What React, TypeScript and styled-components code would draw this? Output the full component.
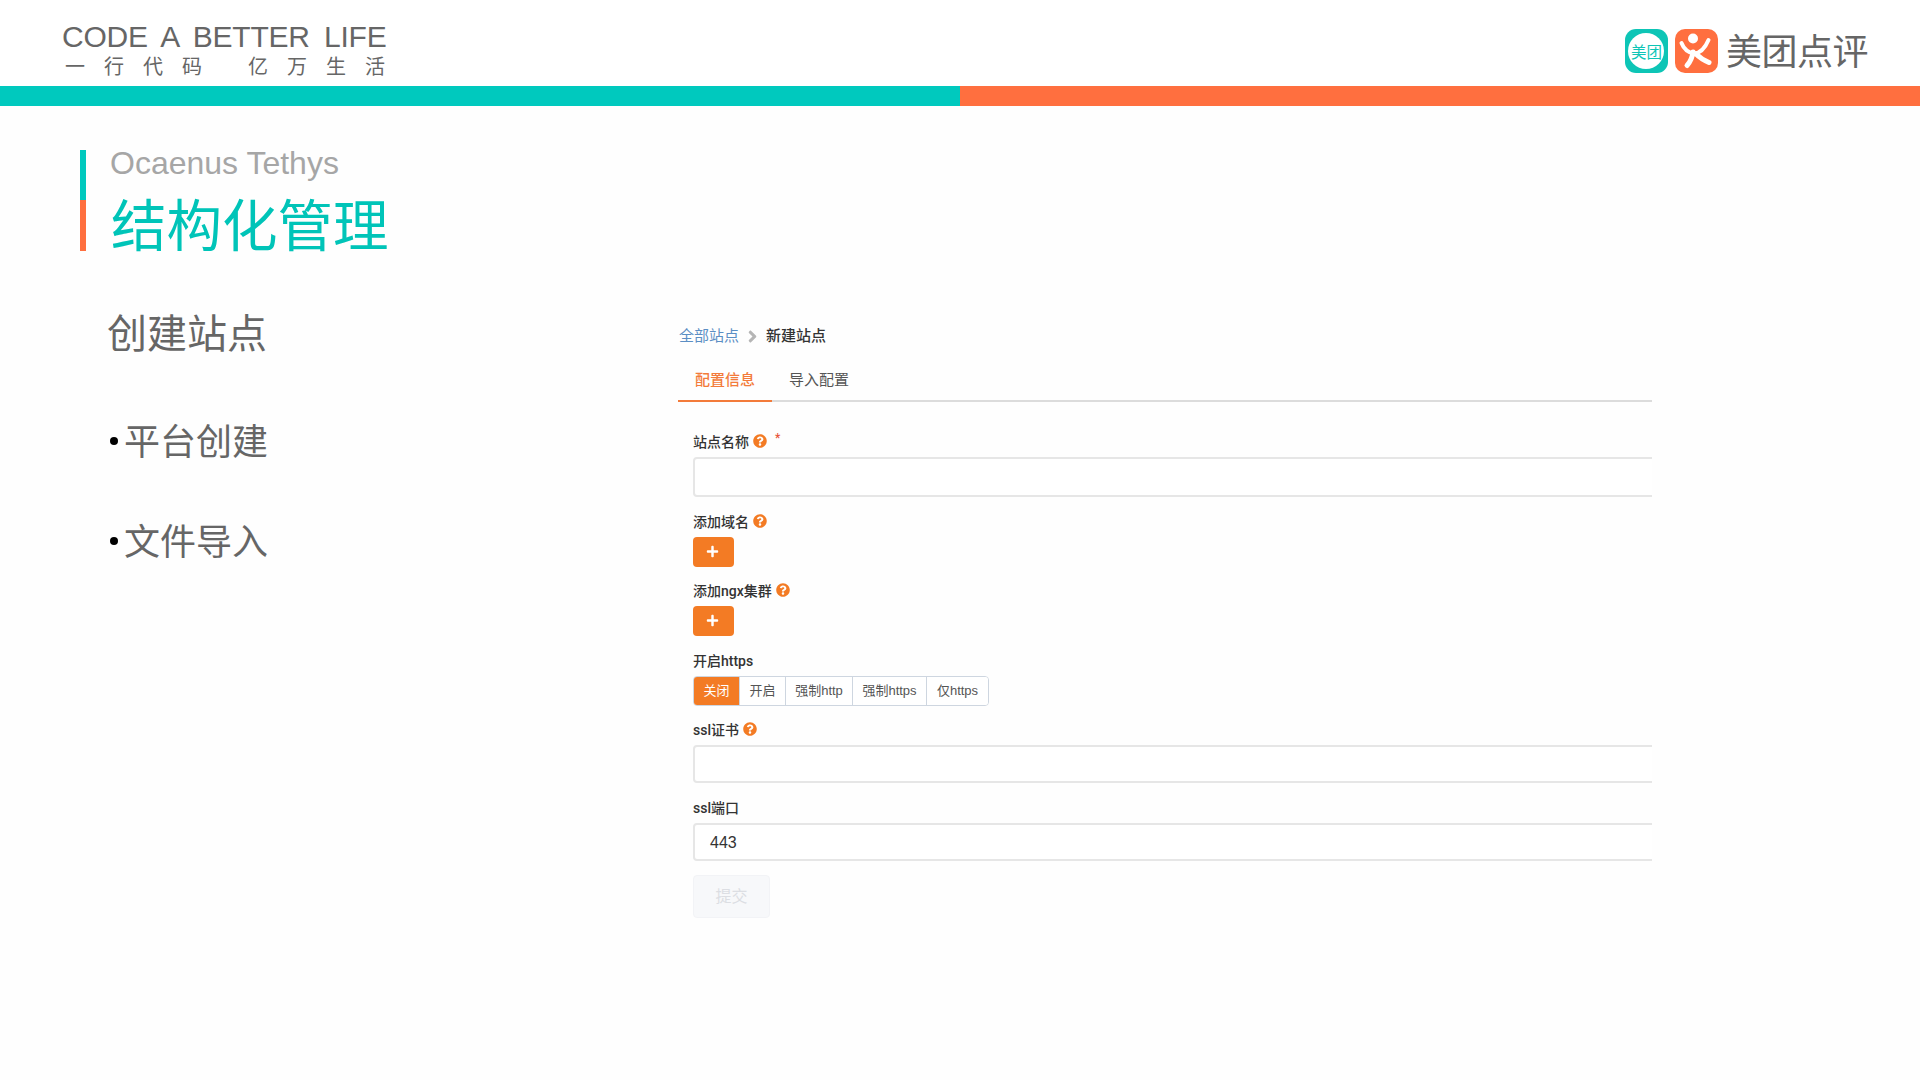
import styled, { createGlobalStyle } from 'styled-components';
import { FaAngleRight, FaPlus, FaQuestionCircle } from 'react-icons/fa';

const GlobalStyle = createGlobalStyle`
  html, body {
    margin: 0;
    padding: 0;
    background: #fff;
  }
  body {
    font-family: "Liberation Sans", "Noto Sans CJK SC", sans-serif;
  }
`;

const Page = styled.div`
  width: 1920px;
  height: 1080px;
  overflow: hidden;
  background: #fefefe;
`;

const Header = styled.header`
  height: 86px;
  display: flex;
  justify-content: space-between;
  align-items: flex-start;
  padding: 0 52px 0 62px;
  box-sizing: border-box;
  background: #fff;
`;

const Motto = styled.div`
  padding-top: 20px;
  color: #666;
`;

const MottoEn = styled.div`
  font-size: 30px;
  line-height: 34px;
  letter-spacing: -0.2px;
  word-spacing: 6px;
  white-space: nowrap;
`;

const MottoCn = styled.div`
  display: flex;
  gap: 27px;
  margin: -1px 0 0 3px;
  font-family: "Noto Sans CJK SC", sans-serif;
  font-size: 20px;
  line-height: 26px;
  letter-spacing: 19px;
  white-space: nowrap;
`;

const Brand = styled.div`
  display: flex;
  align-items: center;
  gap: 7px;
  padding-top: 28px;
`;

const BrandName = styled.span`
  margin: 0 0 3px 1px;
  font-family: "Noto Sans CJK SC", sans-serif;
  font-size: 36px;
  line-height: 43px;
  letter-spacing: -0.5px;
  color: #666;
`;

const MeituanIcon = styled.div`
  width: 43px;
  height: 44px;
  border-radius: 11px;
  background: #0dc5b6;
  display: flex;
  align-items: center;
  justify-content: center;
`;

const MeituanDisc = styled.div`
  width: 36px;
  height: 36px;
  border-radius: 50%;
  background: #fff;
  color: #0dc5b6;
  font-family: "Noto Sans CJK SC", sans-serif;
  font-size: 15.5px;
  line-height: 36px;
  text-align: center;
  white-space: nowrap;
`;

const ColorBar = styled.div`
  display: flex;
  height: 20px;
`;

const ColorSegment = styled.div<{ $colour: string }>`
  flex: 1;
  background: ${(p) => p.$colour};
`;

const TitleBlock = styled.div`
  display: flex;
  margin: 44px 0 0 80px;
  height: 101px;
`;

const AccentBar = styled.div`
  width: 6px;
  background: linear-gradient(#00c9be 0 50px, #ff6f3f 50px);
`;

const TitleText = styled.div`
  margin-left: 24px;
`;

const Subtitle = styled.div`
  font-size: 32px;
  line-height: 38px;
  color: #a6a6a6;
  margin-top: -6px;
`;

const Title = styled.h1`
  margin: 5px 0 0 1px;
  font-family: "Noto Sans CJK SC", sans-serif;
  font-size: 55.5px;
  line-height: 70px;
  font-weight: 400;
  color: #00c4b8;
`;

const Body = styled.div`
  display: flex;
  margin-top: 53px;
`;

const Points = styled.div`
  width: 678px;
  flex: none;
  box-sizing: border-box;
  padding-left: 107px;
  font-family: "Noto Sans CJK SC", sans-serif;
  color: #666;
`;

const PointHeading = styled.div`
  font-size: 40px;
  line-height: 52px;
  margin-top: 1px;
`;

const Point = styled.div<{ $gap: number }>`
  display: flex;
  align-items: center;
  margin-top: ${(p) => p.$gap}px;
  font-size: 36px;
  line-height: 50px;
`;

const Bullet = styled.i`
  width: 8px;
  height: 8px;
  margin: 4px 6px 0 3px;
  border-radius: 50%;
  background: #000;
`;

const Panel = styled.div`
  width: 974px;
  flex: none;
  overflow: hidden;
  padding-top: 22px;
  font-size: 14px;
`;

const Breadcrumb = styled.div`
  display: flex;
  align-items: center;
  height: 20px;
  padding-left: 1px;
  font-size: 15px;
  line-height: 20px;
`;

const CrumbLink = styled.a`
  color: #5b8ec4;
`;

const CrumbSeparator = styled.span`
  display: flex;
  justify-content: center;
  width: 27px;
  color: #b5b5b5;
  font-size: 19px;
`;

const CrumbCurrent = styled.span`
  color: #333;
  font-weight: 500;
`;

const Tabs = styled.div`
  display: flex;
  margin-top: 14px;
  height: 40px;
  border-bottom: 2px solid #dcdcdc;
  box-sizing: content-box;
`;

const Tab = styled.div<{ $active?: boolean }>`
  padding: 0 17px;
  margin-bottom: -2px;
  font-size: 15px;
  line-height: 39px;
  font-weight: ${(p) => (p.$active ? 500 : 400)};
  color: ${(p) => (p.$active ? '#f37b3a' : '#555')};
  border-bottom: 2px solid ${(p) => (p.$active ? '#f37b3a' : 'transparent')};
`;

const Form = styled.div`
  padding: 29px 0 0 15px;
`;

const Field = styled.div<{ $gap?: number }>`
  margin-bottom: ${(p) => p.$gap ?? 13.5}px;
`;

const Label = styled.div`
  display: flex;
  align-items: center;
  height: 20px;
  margin-bottom: 6px;
  font-family: Roboto, "Noto Sans CJK SC", sans-serif;
  font-weight: 500;
  color: #333;
`;

const Help = styled(FaQuestionCircle)`
  margin-left: 4px;
  font-size: 14px;
  color: #f37b24;
`;

const Required = styled.span`
  align-self: flex-start;
  margin-left: 8px;
  color: #e8553a;
  font-size: 12px;
  line-height: 14px;
`;

const TextInput = styled.div<{ $height: number }>`
  display: flex;
  align-items: center;
  width: calc(100% + 10px);
  height: ${(p) => p.$height}px;
  box-sizing: border-box;
  padding: 2px 0 0 15px;
  border: 2px solid #e6e6e6;
  border-radius: 4px;
  background: #fff;
  font-size: 16px;
  color: #333;
`;

const AddButton = styled.button`
  display: flex;
  align-items: center;
  justify-content: center;
  width: 41px;
  height: 30px;
  padding: 0 3px 1px 0;
  border: 0;
  border-radius: 4px;
  background: #f37b24;
  color: #fff;
  font-size: 13px;
`;

const Segmented = styled.div`
  display: inline-flex;
  height: 30px;
  box-sizing: border-box;
  border: 1px solid #ced6e0;
  border-radius: 4px;
  overflow: hidden;
  vertical-align: top;
`;

const Segment = styled.div<{ $active?: boolean; $width: number }>`
  width: ${(p) => p.$width}px;
  box-sizing: border-box;
  text-align: center;
  font-size: 13px;
  line-height: 28px;
  color: ${(p) => (p.$active ? '#fff' : '#555')};
  background: ${(p) => (p.$active ? '#f37b24' : '#fff')};
  border-right: 1px solid #ced6e0;
  &:last-child {
    border-right: 0;
  }
`;

const SubmitButton = styled.div`
  width: 77px;
  height: 43px;
  box-sizing: border-box;
  border: 1px solid #f2f3f6;
  border-radius: 4px;
  background: #f7f8fa;
  color: #dcdee3;
  font-size: 16px;
  line-height: 41px;
  text-align: center;
`;

const segments = [
  { label: '关闭', width: 46, active: true },
  { label: '开启', width: 46 },
  { label: '强制http', width: 67 },
  { label: '强制https', width: 74 },
  { label: '仅https', width: 61 },
];

const DianpingIcon = () => (
  <svg width="43" height="44" viewBox="0 0 43 44">
    <rect width="43" height="44" rx="10" fill="#ff6f3f" />
    <circle cx="18" cy="9.5" r="5" fill="#fff" />
    <path
      d="M6.5 14 Q10 23 19 24.5 Q28 24 33.5 11"
      fill="none"
      stroke="#fff"
      strokeWidth="4"
      strokeLinecap="round"
    />
    <path
      d="M18 23 Q17 31 12 36.5 M21 25 Q26 30 34 33.5"
      fill="none"
      stroke="#fff"
      strokeWidth="5"
      strokeLinecap="round"
    />
  </svg>
);

const App = () => (
  <Page>
    <GlobalStyle />
    <Header>
      <Motto>
        <MottoEn>CODE A BETTER LIFE</MottoEn>
        <MottoCn>
          <span>一行代码</span>
          <span>亿万生活</span>
        </MottoCn>
      </Motto>
      <Brand>
        <MeituanIcon>
          <MeituanDisc>美团</MeituanDisc>
        </MeituanIcon>
        <DianpingIcon />
        <BrandName>美团点评</BrandName>
      </Brand>
    </Header>
    <ColorBar>
      <ColorSegment $colour="#00c9be" />
      <ColorSegment $colour="#ff6f3f" />
    </ColorBar>
    <TitleBlock>
      <AccentBar />
      <TitleText>
        <Subtitle>Ocaenus Tethys</Subtitle>
        <Title>结构化管理</Title>
      </TitleText>
    </TitleBlock>
    <Body>
      <Points>
        <PointHeading>创建站点</PointHeading>
        <Point $gap={57}>
          <Bullet />
          平台创建
        </Point>
        <Point $gap={50}>
          <Bullet />
          文件导入
        </Point>
      </Points>
      <Panel>
        <Breadcrumb>
          <CrumbLink>全部站点</CrumbLink>
          <CrumbSeparator>
            <FaAngleRight />
          </CrumbSeparator>
          <CrumbCurrent>新建站点</CrumbCurrent>
        </Breadcrumb>
        <Tabs>
          <Tab $active>配置信息</Tab>
          <Tab>导入配置</Tab>
        </Tabs>
        <Form>
          <Field>
            <Label>
              站点名称
              <Help />
              <Required>*</Required>
            </Label>
            <TextInput $height={40} />
          </Field>
          <Field>
            <Label>
              添加域名
              <Help />
            </Label>
            <AddButton>
              <FaPlus />
            </AddButton>
          </Field>
          <Field>
            <Label>
              添加ngx集群
              <Help />
            </Label>
            <AddButton>
              <FaPlus />
            </AddButton>
          </Field>
          <Field>
            <Label>开启https</Label>
            <Segmented>
              {segments.map((s) => (
                <Segment key={s.label} $active={s.active} $width={s.width}>
                  {s.label}
                </Segment>
              ))}
            </Segmented>
          </Field>
          <Field>
            <Label>
              ssl证书
              <Help />
            </Label>
            <TextInput $height={38} />
          </Field>
          <Field $gap={14}>
            <Label>ssl端口</Label>
            <TextInput $height={38}>443</TextInput>
          </Field>
          <SubmitButton>提交</SubmitButton>
        </Form>
      </Panel>
    </Body>
  </Page>
);

export default App;
